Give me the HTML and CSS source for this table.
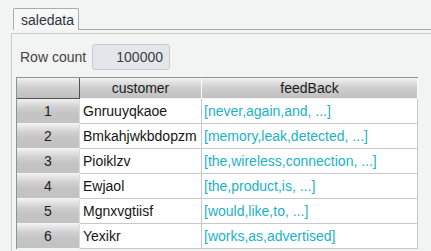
FILE: index.html
```html
<!DOCTYPE html>
<html>
<head>
<meta charset="utf-8">
<link rel="stylesheet" href="styles.css">
</head>
<body>
<div class="tabstrip">
  <div class="tab">saledata</div>
  <div class="tabline"></div>
</div>
<div class="panel">
  <div class="countrow">
    <span class="label">Row count</span>
    <div class="countbox">100000</div>
  </div>
  <table class="grid">
    <thead>
      <tr>
        <th class="corner"></th>
        <th class="colh cust">customer</th>
        <th class="colh fb">feedBack</th>
      </tr>
    </thead>
    <tbody>
      <tr><td class="rh">1</td><td class="c">Gnruuyqkaoe</td><td class="f">[never,again,and, ...]</td></tr>
      <tr><td class="rh">2</td><td class="c">Bmkahjwkbdopzm</td><td class="f">[memory,leak,detected, ...]</td></tr>
      <tr><td class="rh">3</td><td class="c">Pioiklzv</td><td class="f">[the,wireless,connection, ...]</td></tr>
      <tr><td class="rh">4</td><td class="c">Ewjaol</td><td class="f">[the,product,is, ...]</td></tr>
      <tr><td class="rh">5</td><td class="c">Mgnxvgtiisf</td><td class="f">[would,like,to, ...]</td></tr>
      <tr><td class="rh">6</td><td class="c">Yexikr</td><td class="f">[works,as,advertised]</td></tr>
    </tbody>
  </table>
</div>
</body>
</html>
```
FILE: styles.css
```css
html, body {
  margin: 0;
  padding: 0;
  background: #f2f3f3;
  font-family: "Liberation Sans", Arial, sans-serif;
  font-size: 14px;
  color: #1c1c1c;
  overflow: hidden;
}
body {
  display: flex;
  flex-direction: column;
  height: 251px;
}
.tabstrip {
  display: flex;
  align-items: flex-end;
  height: 30px;
  flex: none;
}
.tab {
  margin-left: 13px;
  width: 66px;
  height: 22px;
  box-sizing: border-box;
  border: 1px solid #a9adad;
  border-bottom: none;
  border-radius: 2px 2px 0 0;
  background: #f6f7f7;
  padding: 3px 0 0 7px;
  color: #2e3440;
  line-height: 17px;
}
.tabline {
  flex: 1;
  height: 1px;
  background: #a3a8a8;
}
.panel {
  flex: 1;
  min-height: 0;
  overflow: hidden;
  margin-left: 11px;
  margin-top: 3px;
  border-left: 1px solid #c9cccc;
  border-top: 1px solid #c6caca;
}
.countrow {
  display: flex;
  align-items: center;
  height: 26px;
  margin-top: 10px;
  padding-left: 8px;
}
.label {
  color: #444;
  width: 72px;
}
.countbox {
  width: 78px;
  height: 26px;
  box-sizing: border-box;
  border: 1px solid #c7cbd0;
  border-radius: 3px;
  background: #e3e6ea;
  color: #404040;
  text-align: right;
  padding-right: 6px;
  line-height: 24px;
}
.grid {
  margin-top: 7px;
  margin-left: 4px;
  border-collapse: separate;
  border-spacing: 0;
  border-left: 1px solid #8b9494;
  border-top: 1px solid #8b9494;
  background: #ffffff;
}
.grid th {
  font-weight: normal;
  height: 21px;
  padding: 0;
  box-sizing: border-box;
  background: linear-gradient(#f2f2f2, #cfcfcf 45%, #c0c0c0);
  color: #1c1c1c;
}
.corner {
  width: 63px;
  border-right: 1px solid #4e5252;
  border-bottom: 1px solid #4e5252;
}
.colh {
  border-right: 1px solid #f8f8f8;
  border-bottom: 1px solid #f4f4f4;
}
.cust { width: 122px; }
.fb { width: 216px; }
.grid td {
  height: 25px;
  padding: 0;
  box-sizing: border-box;
  border-right: 1px solid #c8c8c8;
  border-bottom: 1px solid #c8c8c8;
  white-space: nowrap;
}
.grid td.rh {
  text-align: center;
  color: #222;
  background: linear-gradient(#f0f0f0, #d0d0d0 35%, #c4c4c4 60%, #c2c2c2);
  border-right: 1px solid #dcdcdc;
  border-bottom: 1px solid #f4f4f4;
}
.grid td.c {
  padding-left: 3px;
  color: #141414;
}
.grid td.f {
  padding-left: 2px;
  color: #19b2c8;
}
```
